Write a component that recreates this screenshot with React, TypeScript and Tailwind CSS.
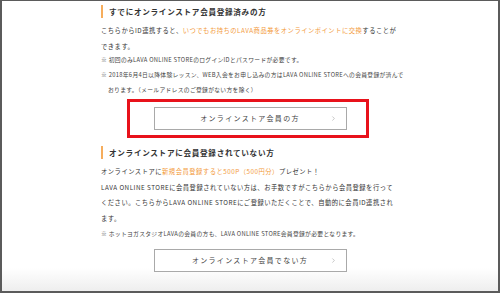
import { ChevronRight } from "lucide-react";

const jp = "font-['Noto_Sans_CJK_JP','Noto_Sans',sans-serif]";

function Heading({ children }: { children: React.ReactNode }) {
  return (
    <div className="flex items-center h-[13px] border-l-2 border-[#f6ad5c] pl-[6px]">
      <span className="text-[7.6px] font-bold tracking-[0.7px] text-[#333]">{children}</span>
    </div>
  );
}

function LinkButton({ label }: { label: string }) {
  return (
    <div className="relative flex items-center justify-center w-[193px] h-[23px] mx-auto border border-[#a9a9a9] bg-white">
      <span className="text-[7px] tracking-[1.3px] text-[#444]">{label}</span>
      <span className="absolute right-[9px] top-0 bottom-0 flex items-center">
        <ChevronRight className="w-[7px] h-[7px] text-[#777]" strokeWidth={1.4} />
      </span>
    </div>
  );
}

export default function App() {
  return (
    <div
      className={`${jp} w-[500px] h-[293px] overflow-hidden border-x-2 border-t border-b-2 border-[#5b5b5b] bg-[linear-gradient(to_bottom,#ffffff_92%,#eeeeee)]`}
    >
      <div className="w-[298px] mx-auto pt-[4px] text-[#333]">
        {/* registered members */}
        <Heading>すでにオンラインストア会員登録済みの方</Heading>
        <p className="mt-[5px] text-[6.3px] leading-[16px] tracking-[0.5px]">
          こちらからID連携すると、
          <span className="text-[#f39b3c]">いつでもお持ちのLAVA商品券をオンラインポイントに交換</span>
          することが
          <br />
          できます。
        </p>
        <ul className="-mt-[3px] text-[5.8px] leading-[15px] tracking-[0.3px] text-[#444] whitespace-nowrap">
          <li>※ 初回のみLAVA ONLINE STOREのログインIDとパスワードが必要です。</li>
          <li>
            ※ 2018年6月4日以降体験レッスン、WEB入会をお申し込みの方はLAVA ONLINE STOREへの会員登録が済んで
            <br />
            <span className="pl-[7px]">おります。（メールアドレスのご登録がない方を除く）</span>
          </li>
        </ul>
        <div className="relative mt-[10px]">
          <LinkButton label="オンラインストア会員の方" />
          <div className="absolute left-[26px] right-[30px] -top-[8px] -bottom-[8px] border-[3px] border-[#e8121b]" />
        </div>

        {/* not yet registered */}
        <div className="mt-[16px]">
          <Heading>オンラインストアに会員登録されていない方</Heading>
        </div>
        <p className="mt-[5px] text-[6.3px] leading-[15.5px] tracking-[0.5px]">
          オンラインストアに<span className="text-[#f39b3c]">新規会員登録すると500P（500円分）</span>プレゼント！
          <br />
          LAVA ONLINE STOREに会員登録されていない方は、お手数ですがこちらから会員登録を行って
          <br />
          ください。こちらからLAVA ONLINE STOREにご登録いただくことで、自動的に会員ID連携され
          <br />
          ます。
        </p>
        <p className="text-[5.8px] leading-[15px] tracking-[0.3px] text-[#444] whitespace-nowrap">
          ※ ホットヨガスタジオLAVAの会員の方も、LAVA ONLINE STORE会員登録が必要となります。
        </p>
        <div className="mt-[8px]">
          <LinkButton label="オンラインストア会員でない方" />
        </div>
      </div>
    </div>
  );
}
